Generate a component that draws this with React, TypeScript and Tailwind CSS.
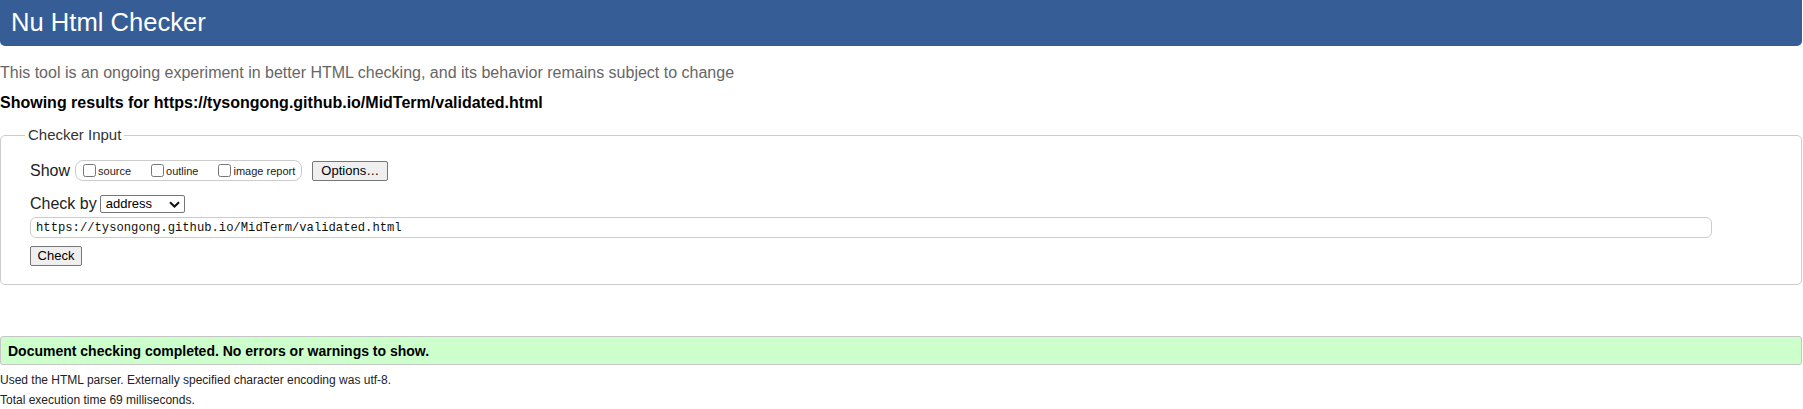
const url = "https://tysongong.github.io/MidTerm/validated.html"

const showOptions = [
  { label: "source", gap: "mr-[20px]" },
  { label: "outline", gap: "mr-[20px]" },
  { label: "image report", gap: "" },
]

export default function App() {
  return (
    <div className="w-[1802px] bg-white font-['Liberation_Sans',Arial,sans-serif] text-black">
      <h1 className="h-[46px] flex items-center pl-[11px] pb-[1px] bg-[#365d96] rounded-b-[5px] text-white text-[25.6px] font-normal">
        Nu Html Checker
      </h1>

      <p className="mt-[17px] text-[16px] leading-[20px] text-[#666]">
        This tool is an ongoing experiment in better HTML checking, and its behavior remains subject to change
      </p>
      <p className="mt-[10px] text-[16px] leading-[20px] font-bold">Showing results for {url}</p>

      <fieldset className="mt-[13px] border border-[#ccc] rounded-[5px] pl-[24px] pb-[17px]">
        <legend className="px-[3px] text-[15px] leading-[18px] text-[#333]">Checker Input</legend>
        <div className="ml-[5px]">
          <div className="mt-[16px] flex items-center h-[21px]">
            <span className="text-[16px] leading-[20px] text-[#222]">Show</span>
            <div className="ml-[5px] h-[21px] flex items-center border border-[#ccc] rounded-[8px] pl-[7px] pr-[6px]">
              {showOptions.map((opt) => (
                <label key={opt.label} className={`flex items-center ${opt.gap}`}>
                  <input type="checkbox" className="w-[13px] h-[13px] m-0" />
                  <span className="ml-[2px] mt-[2px] text-[11px] leading-[13px] text-[#222]">{opt.label}</span>
                </label>
              ))}
            </div>
            <button className="ml-[10px] w-[76px] h-[20px] bg-[#efefef] border border-[#767676] rounded-[2px] text-[13px] leading-[16px] text-black">
              Options…
            </button>
          </div>

          <div className="mt-[14px] flex items-center h-[18px]">
            <span className="text-[16px] leading-[20px] text-[#222]">Check by</span>
            <div className="ml-[3px] w-[85px] h-[18px] flex items-center justify-between border border-[#767676] rounded-[2px] pl-[5px] pr-[4px]">
              <span className="text-[13px] leading-[16px]">address</span>
              <svg width="11" height="7" viewBox="0 0 11 7" fill="none">
                <path d="M1 1.2 5.5 5.5 10 1.2" stroke="#111" strokeWidth="2" />
              </svg>
            </div>
          </div>

          <div className="mt-[4px] w-[1682px] h-[21px] flex items-center border border-[#ccc] rounded-[6px] pl-[5px]">
            <span className="font-['Liberation_Mono',monospace] text-[12.2px] leading-[16px] text-[#111]">{url}</span>
          </div>

          <button className="mt-[8px] w-[52px] h-[20px] bg-[#efefef] border border-[#767676] rounded-[2px] text-[13px] leading-[16px] text-black">
            Check
          </button>
        </div>
      </fieldset>

      <div className="mt-[51px] h-[29px] flex items-center bg-[#ccffcc] border border-[#c6c6c6] rounded-[3px] pl-[7px]">
        <span className="text-[14px] leading-[18px] font-bold">
          Document checking completed. No errors or warnings to show.
        </span>
      </div>

      <p className="mt-[7px] text-[12px] leading-[16px] text-[#222]">
        Used the HTML parser. Externally specified character encoding was utf-8.
      </p>
      <p className="mt-[4px] text-[12px] leading-[16px] text-[#222]">Total execution time 69 milliseconds.</p>
    </div>
  )
}
